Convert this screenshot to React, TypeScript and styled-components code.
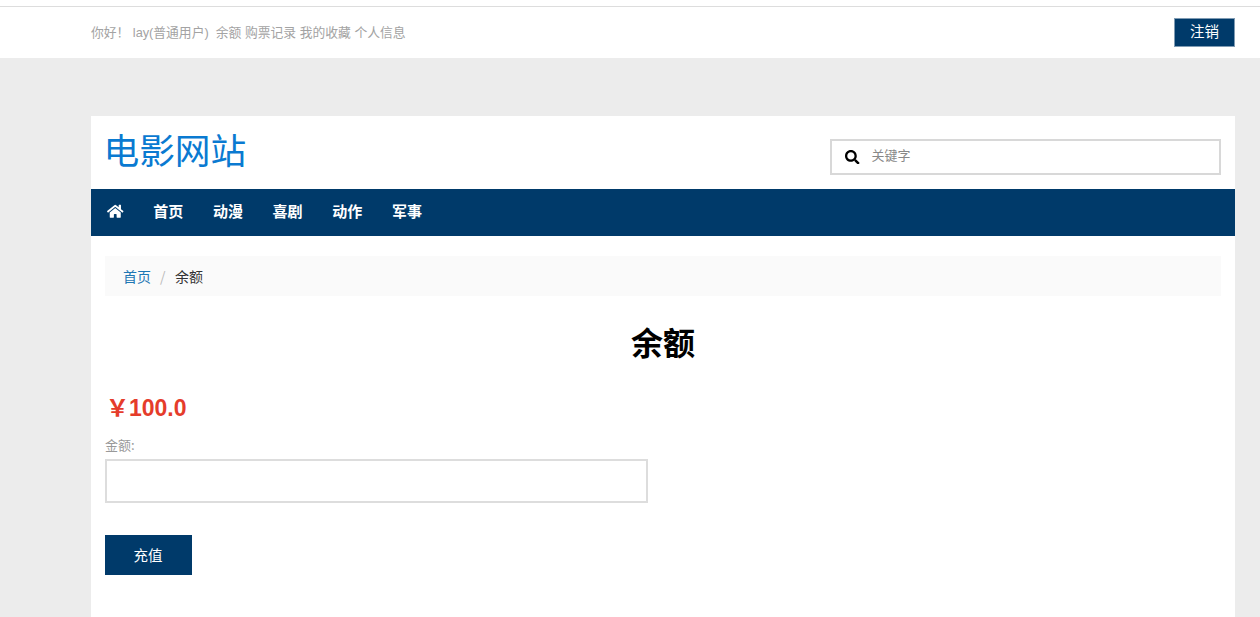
import React from 'react';
import styled, { createGlobalStyle } from 'styled-components';
import { FaHome, FaSearch } from 'react-icons/fa';

const Global = createGlobalStyle`
  html, body { margin: 0; padding: 0; background: #ececec; }
  body { font-family: "Open Sans", "Liberation Sans", "Noto Sans CJK SC", sans-serif; overflow: hidden; height: 617px; }
  * { box-sizing: border-box; }
`;
const Top = styled.header`
  height: 58px; background: #fff; padding-top: 6px;
`;
const TopInner = styled.div`
  border-top: 1px solid #ddd; padding: 11px 25px 0 91px;
  display: flex; justify-content: space-between; align-items: flex-start;
`;
const Greeting = styled.div`
  display: flex; gap: 3.6px; font-size: 12.8px; line-height: 29px; color: #a3a3a3;
  font-family: "Liberation Sans", "Noto Sans CJK SC", sans-serif;
`;
const Hello = styled.span` margin-right: 3.5px; letter-spacing: -0.03px; `;
const Logout = styled.button`
  width: 61px; height: 29px; border: 1px solid #7f9bb3; background: #003a6a; color: #fff; font-size: 14.5px; padding: 0 0 4px;
  font-family: "Noto Sans CJK SC", sans-serif;
`;
const Panel = styled.main`
  margin: 58px 25px 0 91px; background: #fff; height: 501px;
`;
const Brand = styled.div`
  height: 73px; padding: 0 14px; display: flex; justify-content: space-between; align-items: center;
`;
const Logo = styled.div`
  color: #0a7ad1; font-size: 35.7px; line-height: 1; font-family: "Noto Sans CJK SC", sans-serif; font-weight: 400;
  margin-bottom: 8px; margin-left: -1.5px;
`;
const Search = styled.div`
  width: 391px; height: 36px; border: 2px solid #d8d8d8; display: flex; align-items: center; padding-left: 13px;
  margin-top: 9px; gap: 12px; color: #000; font-size: 14.5px;
`;
const Placeholder = styled.span`
  color: #888; font-size: 13px; font-family: "Noto Sans CJK SC", sans-serif; margin-bottom: 6px;
`;
const Nav = styled.nav`
  height: 47px; background: #003a6a; display: flex; align-items: center; padding-left: 16px; gap: 29.7px;
  color: #fff; font-weight: 700; font-size: 15px; font-family: "Noto Sans CJK SC", sans-serif;
`;
const HomeLink = styled.span`
  display: flex; font-size: 16.5px; margin: 0 0 2px;
`;
const NavItem = styled.span` margin-bottom: 4px; `;
const Content = styled.div` padding: 20px 14px 0 14px; `;
const Crumbs = styled.div`
  height: 40px; background: #fafafa; padding-left: 18px; display: flex; align-items: center; font-size: 14px;
  color: #333; font-family: "Noto Sans CJK SC", sans-serif;
`;
const CrumbLink = styled.a` color: #1f77b4; `;
const Sep = styled.span` color: #bbb; margin: 0 9.5px 0 9px; `;
const Title = styled.h1`
  margin: 22px 0 0; text-align: center; font-size: 32px; line-height: 46px; color: #000; font-weight: 700;
  font-family: "Noto Sans CJK SC", sans-serif;
`;
const Balance = styled.div`
  margin-top: 29px; color: #e53c2b; font-size: 23px; line-height: 30px; font-weight: 700; padding-left: 1px;
  font-family: "Liberation Sans", "Noto Sans CJK SC", sans-serif;
`;
const Label = styled.label`
  display: block; margin-top: 13px; font-size: 13px; line-height: 17px; color: #999;
  font-family: "Noto Sans CJK SC", sans-serif;
`;
const Amount = styled.input`
  display: block; width: 543px; height: 44px; margin-top: 6px; border: 2px solid #ddd; background: #fff; outline: none;
`;
const Submit = styled.button`
  display: block; margin-top: 32px; width: 87px; height: 40px; border: 0; background: #003a6a; color: #fff; font-size: 14.5px;
  font-family: "Noto Sans CJK SC", sans-serif; padding: 0 1px 2px 0;
`;

export default function App() {
  return (
    <>
      <Global />
      <Top>
        <TopInner>
          <Greeting>
            <Hello>你好！ lay(普通用户)</Hello>
            <span>余额</span><span>购票记录</span><span>我的收藏</span><span>个人信息</span>
          </Greeting>
          <Logout>注销</Logout>
        </TopInner>
      </Top>
      <Panel>
        <Brand>
          <Logo>电影网站</Logo>
          <Search><FaSearch /><Placeholder>关键字</Placeholder></Search>
        </Brand>
        <Nav>
          <HomeLink><FaHome /></HomeLink>
          <NavItem>首页</NavItem><NavItem>动漫</NavItem><NavItem>喜剧</NavItem><NavItem>动作</NavItem><NavItem>军事</NavItem>
        </Nav>
        <Content>
          <Crumbs><CrumbLink>首页</CrumbLink><Sep>/</Sep><span>余额</span></Crumbs>
          <Title>余额</Title>
          <Balance>￥100.0</Balance>
          <Label>金额:</Label>
          <Amount />
          <Submit>充值</Submit>
        </Content>
      </Panel>
    </>
  );
}
